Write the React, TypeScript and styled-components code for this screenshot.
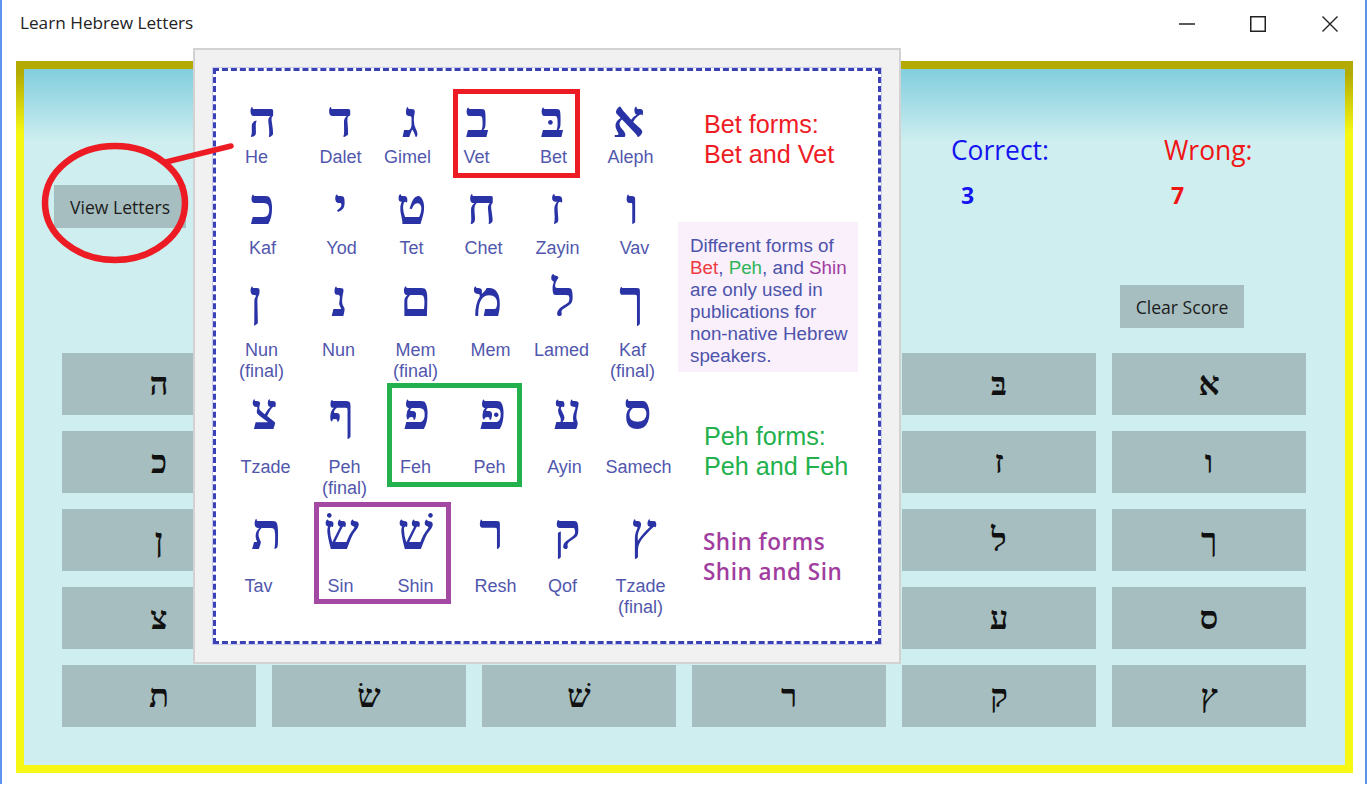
import React from "react";
import styled, { createGlobalStyle } from "styled-components";

const Global = createGlobalStyle`
  html, body { margin: 0; padding: 0; background: #fff; overflow: hidden; }
  body { font-family: "Open Sans", "Noto Sans", sans-serif; color: #1a1a1a; }
`;

const Page = styled.div`
  position: relative;
  width: 1369px;
  height: 787px;
  background: #fff;
  overflow: hidden;
`;
const Win = styled.div`
  width: 1367px;
  height: 784px;
  box-sizing: border-box;
  border-left: 2px solid #5b93ee;
  border-right: 2px solid #5b93ee;
  display: flex;
  flex-direction: column;
`;
const TitleBar = styled.header`
  height: 61px;
  flex: none;
  display: flex;
  align-items: flex-start;
  padding-left: 18px;
`;
const Title = styled.div`
  flex: 1;
  font-size: 17.2px;
  line-height: 24px;
  margin-top: 11px;
  color: #222;
`;
const WinBtn = styled.div`
  width: 71.5px;
  height: 46px;
  display: flex;
  align-items: center;
  justify-content: center;
  svg { display: block; margin: 1px 0 0 1px; }
`;
const Frame = styled.main`
  width: 1337px;
  height: 712px;
  margin-left: 14px;
  box-sizing: border-box;
  padding: 8px;
  background: linear-gradient(180deg, #b3ab02 0px, #b3ab02 12px, #f7f714 72px, #f7f714 100%);
`;
const Inner = styled.div`
  height: 100%;
  background: linear-gradient(180deg, #83cede 0px, #a5dde6 35px, #ceeeef 72px, #ceeeef 100%);
  display: flex;
  flex-direction: column;
`;
const Top = styled.section`
  height: 284px;
  flex: none;
  display: grid;
  grid-template-columns: 927px 169px 1fr;
`;
const ViewCol = styled.div`
  padding: 116px 0 0 30px;
`;
const Btn = styled.div<{ $w: number }>`
  width: ${(p) => p.$w}px;
  height: 43px;
  background: #a6bebf;
  display: flex;
  align-items: center;
  justify-content: center;
  font-size: 17.6px;
  color: #1c1c1c;
`;
const Stat = styled.div`
  padding-top: 63px;
`;
const StatLabel = styled.div<{ $c: string; $pad?: number }>`
  font-size: 26.4px;
  line-height: 36px;
  height: 36px;
  padding-left: ${(p) => p.$pad ?? 0}px;
  color: ${(p) => p.$c};
`;
const StatNum = styled.div<{ $c: string; $ml: number }>`
  font-size: 23px;
  font-weight: 700;
  line-height: 30px;
  margin: 12px 0 0 ${(p) => p.$ml}px;
  color: ${(p) => p.$c};
`;
const ClearWrap = styled.div`
  margin-top: 75px;
`;
const Keys = styled.section`
  margin-left: 38px;
  display: grid;
  grid-template-columns: repeat(6, 194px);
  grid-auto-rows: 62px;
  gap: 16px;
`;
const Key = styled.div`
  background: #a6bebf;
  display: flex;
  align-items: center;
  justify-content: center;
  font-family: "Liberation Serif", serif;
  font-weight: 700;
  font-size: 33px;
  color: #111;
`;

const Popup = styled.aside`
  position: absolute;
  left: 193px;
  top: 48px;
  width: 708px;
  height: 616px;
  box-sizing: border-box;
  background: #f1f1f1;
  border: 2px solid #d2d2d2;
  padding: 18px;
`;
const Chart = styled.div`
  position: relative;
  height: 100%;
  box-sizing: border-box;
  background: #fff;
  border: 3px dashed #3a42b6;
  box-shadow: 0 0 0 1px #c9cbee;
  display: flex;
  padding-left: 10px;
  font-family: "Liberation Sans", sans-serif;
`;
const Letters = styled.div`
  width: 450px;
  flex: none;
  padding-top: 24px;
`;
const Row = styled.div<{ $h: number }>`
  height: ${(p) => p.$h}px;
  display: grid;
  grid-template-columns: repeat(6, 75px);
`;
const Cell = styled.div`
  display: flex;
  flex-direction: column;
  align-items: center;
  min-width: 0;
`;
const Glyph = styled.div<{ $h: number; $dx: number }>`
  height: ${(p) => p.$h}px;
  line-height: 50px;
  margin-left: ${(p) => p.$dx * 2}px;
  font-family: "Liberation Serif", serif;
  font-weight: 700;
  font-size: 50px;
  color: #2a33a6;
  white-space: nowrap;
`;
const Label = styled.div<{ $dx: number }>`
  margin-left: ${(p) => p.$dx * 2}px;
  font-size: 18px;
  line-height: 20.5px;
  color: #5157ad;
  text-align: center;
  white-space: nowrap;
`;
const Side = styled.div`
  width: 190px;
  flex: none;
  padding: 38px 0 0 2px;
  display: flex;
  flex-direction: column;
`;
const Heading = styled.div<{ $c: string; $mt: number; $shin?: boolean }>`
  margin: ${(p) => p.$mt}px 0 0 ${(p) => (p.$shin ? 25 : 26)}px;
  color: ${(p) => p.$c};
  font-family: ${(p) => (p.$shin ? '"Open Sans", sans-serif' : '"Liberation Sans", sans-serif')};
  font-size: ${(p) => (p.$shin ? 22.5 : 25.2)}px;
  font-weight: ${(p) => (p.$shin ? 600 : 400)};
  letter-spacing: ${(p) => (p.$shin ? 0.5 : 0)}px;
  line-height: 30px;
  white-space: nowrap;
`;
const Note = styled.div`
  width: 180px;
  height: 150px;
  box-sizing: border-box;
  margin-top: 53px;
  padding: 13px 0 0 12px;
  background: #f9f0fb;
  color: #4d53ab;
  font-size: 18.8px;
  line-height: 22px;
  white-space: nowrap;
`;
const Tint = styled.span<{ $c: string }>`
  color: ${(p) => p.$c};
`;
const FormBox = styled.div<{ $c: string; $l: number; $t: number; $w: number; $h: number }>`
  position: absolute;
  left: ${(p) => p.$l}px;
  top: ${(p) => p.$t}px;
  width: ${(p) => p.$w}px;
  height: ${(p) => p.$h}px;
  box-sizing: border-box;
  border: 5px solid ${(p) => p.$c};
`;
const Annotation = styled.svg`
  position: absolute;
  left: 0;
  top: 0;
  pointer-events: none;
`;

const base = [264, 339, 414, 489, 564, 639];
const rows: { h: number; gh: number; cells: [string, number, string[], number][] }[] = [
  { h: 87, gh: 52, cells: [["ה", 263, ["He"], 257], ["ד", 341, ["Dalet"], 341], ["ג", 411, ["Gimel"], 408], ["ב", 478, ["Vet"], 477], ["בּ", 553, ["Bet"], 554], ["א", 629, ["Aleph"], 631]] },
  { h: 92, gh: 56, cells: [["כ", 263, ["Kaf"], 263], ["י", 341, ["Yod"], 342], ["ט", 412, ["Tet"], 412], ["ח", 482, ["Chet"], 484], ["ז", 557, ["Zayin"], 558], ["ו", 633, ["Vav"], 635]] },
  { h: 113, gh: 66, cells: [["ן", 256, ["Nun", "(final)"], 262], ["נ", 340, ["Nun"], 339], ["ם", 416, ["Mem", "(final)"], 416], ["מ", 488, ["Mem"], 491], ["ל", 564, ["Lamed"], 562], ["ך", 632, ["Kaf", "(final)"], 633]] },
  { h: 120, gh: 70, cells: [["צ", 265, ["Tzade"], 266], ["ף", 342, ["Peh", "(final)"], 345], ["פ", 417, ["Feh"], 416], ["פּ", 493, ["Peh"], 490], ["ע", 568, ["Ayin"], 565], ["ס", 638, ["Samech"], 639]] },
  { h: 110, gh: 69, cells: [["ת", 267, ["Tav"], 259], ["שׂ", 342, ["Sin"], 341], ["שׁ", 416, ["Shin"], 416], ["ר", 492, ["Resh"], 496], ["ק", 568, ["Qof"], 563], ["ץ", 644, ["Tzade", "(final)"], 641]] },
];
const keys = [
  "ה", "ד", "ג", "ב", "בּ", "א",
  "כ", "י", "ט", "ח", "ז", "ו",
  "ן", "נ", "ם", "מ", "ל", "ך",
  "צ", "ף", "פ", "פּ", "ע", "ס",
  "ת", "שׂ", "שׁ", "ר", "ק", "ץ",
];

export default function App() {
  return (
    <Page>
      <Global />
      <Win>
        <TitleBar>
          <Title>Learn Hebrew Letters</Title>
          <WinBtn>
            <svg width="16" height="16" viewBox="0 0 16 16"><path d="M0 8h16" stroke="#222" strokeWidth="1.5" /></svg>
          </WinBtn>
          <WinBtn>
            <svg width="16" height="16" viewBox="0 0 16 16"><rect x=".75" y=".75" width="14.5" height="14.5" fill="none" stroke="#222" strokeWidth="1.5" /></svg>
          </WinBtn>
          <WinBtn>
            <svg width="16" height="16" viewBox="0 0 16 16"><path d="M.5.5l15 15M15.5.5l-15 15" fill="none" stroke="#222" strokeWidth="1.4" /></svg>
          </WinBtn>
        </TitleBar>
        <Frame>
          <Inner>
            <Top>
              <ViewCol>
                <Btn $w={132}>View Letters</Btn>
              </ViewCol>
              <Stat>
                <StatLabel $c="#1414f0">Correct:</StatLabel>
                <StatNum $c="#1414f0" $ml={10}>3</StatNum>
              </Stat>
              <Stat>
                <StatLabel $c="#f01414" $pad={44}>Wrong:</StatLabel>
                <StatNum $c="#f01414" $ml={51}>7</StatNum>
                <ClearWrap>
                  <Btn $w={124}>Clear Score</Btn>
                </ClearWrap>
              </Stat>
            </Top>
            <Keys>
              {keys.map((k, i) => (
                <Key key={i}>{k}</Key>
              ))}
            </Keys>
          </Inner>
        </Frame>
      </Win>
      <Popup>
        <Chart>
          <Letters>
            {rows.map((r, ri) => (
              <Row key={ri} $h={r.h}>
                {r.cells.map(([g, gx, label, lx], ci) => (
                  <Cell key={ci}>
                    <Glyph $h={r.gh} $dx={gx - base[ci]}>{g}</Glyph>
                    <Label $dx={lx - base[ci]}>
                      {label.map((t, i) => (
                        <div key={i}>{t}</div>
                      ))}
                    </Label>
                  </Cell>
                ))}
              </Row>
            ))}
          </Letters>
          <Side>
            <Heading $c="#ee1c25" $mt={0}>Bet forms:<br />Bet and Vet</Heading>
            <Note>
              Different forms of<br />
              <Tint $c="#ee3a40">Bet</Tint>, <Tint $c="#2fb457">Peh</Tint>, and <Tint $c="#a13d9f">Shin</Tint><br />
              are only used in<br />
              publications for<br />
              non-native Hebrew<br />
              speakers.
            </Note>
            <Heading $c="#22b14c" $mt={49}>Peh forms:<br />Peh and Feh</Heading>
            <Heading $c="#a13d9f" $mt={46} $shin>Shin forms<br />Shin and Sin</Heading>
          </Side>
          <FormBox $c="#ed1c24" $l={237} $t={18} $w={127} $h={89} />
          <FormBox $c="#22b14c" $l={171} $t={312} $w={135} $h={104} />
          <FormBox $c="#a349a4" $l={98} $t={431} $w={137} $h={102} />
        </Chart>
      </Popup>
      <Annotation width="260" height="280" viewBox="0 0 260 280">
        <ellipse cx="115" cy="203" rx="70" ry="57" fill="none" stroke="#ed1c24" strokeWidth="6.5" />
        <path d="M166 162L231 146" stroke="#ed1c24" strokeWidth="5.5" strokeLinecap="round" />
      </Annotation>
    </Page>
  );
}
